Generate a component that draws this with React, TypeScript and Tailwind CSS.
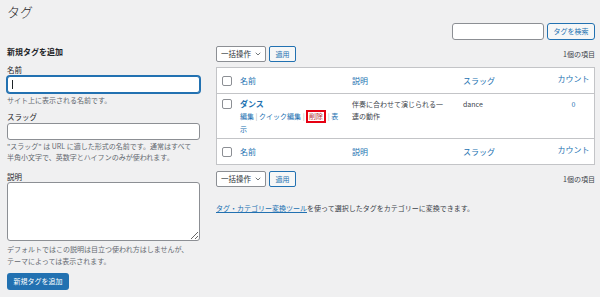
import { ChevronDown } from "lucide-react";

const font = { fontFamily: '"Noto Sans CJK JP", "Noto Sans", "Liberation Sans", sans-serif' };

const BulkActions = () => (
  <div className="flex items-center gap-[3px]">
    <div className="flex h-[16px] w-[50px] items-center justify-between rounded-[2px] border border-[#8c8f94] bg-white pl-[4px] pr-[3px] text-[7.5px] text-[#2c3338]">
      <span>一括操作</span>
      <ChevronDown size={8} strokeWidth={2} />
    </div>
    <button className="h-[16px] w-[27px] rounded-[2px] border border-[#2271b1] bg-[#f6f7f7] text-[7px] text-[#2271b1]">
      適用
    </button>
  </div>
);

const Checkbox = () => (
  <span className="block h-[10px] w-[10px] rounded-[2px] border border-[#8c8f94] bg-white" />
);

const HeadRow = ({ bottom }: { bottom?: boolean }) => (
  <div
    className={`grid h-[26px] grid-cols-[23px_112px_111px_90px_41px] items-center text-[8px] text-[#2271b1] ${
      bottom ? "border-t border-[#c3c4c7]" : "border-b border-[#c3c4c7]"
    }`}
  >
    <div className="pl-[5px]">
      <Checkbox />
    </div>
    <div>名前</div>
    <div>説明</div>
    <div>スラッグ</div>
    <div className="pb-[4px] text-center">カウント</div>
  </div>
);

export default function App() {
  return (
    <div style={font} className="h-[297px] w-[600px] overflow-hidden bg-[#f0f0f1] pl-[7px] pr-[5px] text-[#3c434a]">
      <div className="flex items-start justify-between">
        <h1 className="pt-[4px] text-[13px] leading-[16px] font-light text-[#1d2327]">タグ</h1>
        <div className="mt-[23px] flex gap-[3px]">
          <input className="h-[17px] w-[92px] rounded-[3px] border border-[#8c8f94] bg-white" />
          <button className="h-[17px] w-[48px] rounded-[3px] border border-[#2271b1] bg-[#f6f7f7] text-[7px] text-[#2271b1]">
            タグを検索
          </button>
        </div>
      </div>

      <div className="mt-[6px] flex gap-[16px]">
        <div className="flex w-[193px] flex-col">
          <h2 className="text-[8px] leading-[12px] font-bold text-[#1d2327]">新規タグを追加</h2>

          <label className="mt-[6px] text-[7.5px] leading-[12px] text-[#1d2327]">名前</label>
          <div className="relative">
            <input className="block h-[17px] w-full rounded-[3px] border border-[#2271b1] bg-white shadow-[0_0_0_1px_#2271b1]" />
            <span className="absolute left-[5px] top-[4px] h-[9px] w-px bg-[#1d2327]" />
          </div>
          <p className="mt-[1px] text-[7px] leading-[12px] text-[#646970]">サイト上に表示される名前です。</p>

          <label className="mt-[5px] text-[7.5px] leading-[12px] text-[#1d2327]">スラッグ</label>
          <input className="block h-[17px] w-full rounded-[3px] border border-[#8c8f94] bg-white" />
          <p className="mt-[0.5px] text-[7px] leading-[11.5px] text-[#646970]">
            "スラッグ" は URL に適した形式の名前です。通常はすべて
            <br />
            半角小文字で、英数字とハイフンのみが使われます。
          </p>

          <label className="mt-[8px] text-[7.5px] leading-[10px] text-[#1d2327]">説明</label>
          <textarea className="block h-[59px] w-full rounded-[3px] border border-[#8c8f94] bg-white" />
          <p className="mt-[2px] text-[7px] leading-[12px] text-[#646970]">
            デフォルトではこの説明は目立つ使われ方はしませんが、
            <br />
            テーマによっては表示されます。
          </p>

          <button className="mt-[6px] h-[17px] w-[62px] rounded-[3px] bg-[#2271b1] text-[7px] text-white">
            新規タグを追加
          </button>
        </div>

        <div className="flex flex-1 flex-col">
          <div className="flex items-center justify-between">
            <BulkActions />
            <span className="text-[7px] text-[#3c434a]">1個の項目</span>
          </div>

          <div className="mt-[5px] border border-[#c3c4c7] bg-white">
            <HeadRow />
            <div className="grid h-[44px] grid-cols-[23px_112px_111px_90px_41px] items-start pt-[4px] text-[7px] leading-[12px]">
              <div className="pl-[5px] pt-[1px]">
                <Checkbox />
              </div>
              <div>
                <div className="text-[8px] font-bold text-[#2271b1]">ダンス</div>
                <div className="text-[#2271b1]">
                  編集 <span className="text-[#a7aaad]">|</span> クイック編集{" "}
                  <span className="text-[#a7aaad]">|</span>{" "}
                  <span className="inline-block border-2 border-[#e60012] px-[1px] leading-[9px] text-[#b32d2e]">削除</span>{" "}
                  <span className="text-[#a7aaad]">|</span> 表
                  <br />示
                </div>
              </div>
              <div className="text-[#3c434a]">
                伴奏に合わせて演じられる一
                <br />
                連の動作
              </div>
              <div className="text-[#3c434a]">dance</div>
              <div className="text-center text-[#2271b1]">0</div>
            </div>
            <HeadRow bottom />
          </div>

          <div className="mt-[6px] flex items-center justify-between">
            <BulkActions />
            <span className="text-[7px] text-[#3c434a]">1個の項目</span>
          </div>

          <p className="mt-[15px] text-[7px] leading-[12px] text-[#3c434a]">
            <a className="text-[#2271b1] underline">タグ・カテゴリー変換ツール</a>
            を使って選択したタグをカテゴリーに変換できます。
          </p>
        </div>
      </div>
    </div>
  );
}
